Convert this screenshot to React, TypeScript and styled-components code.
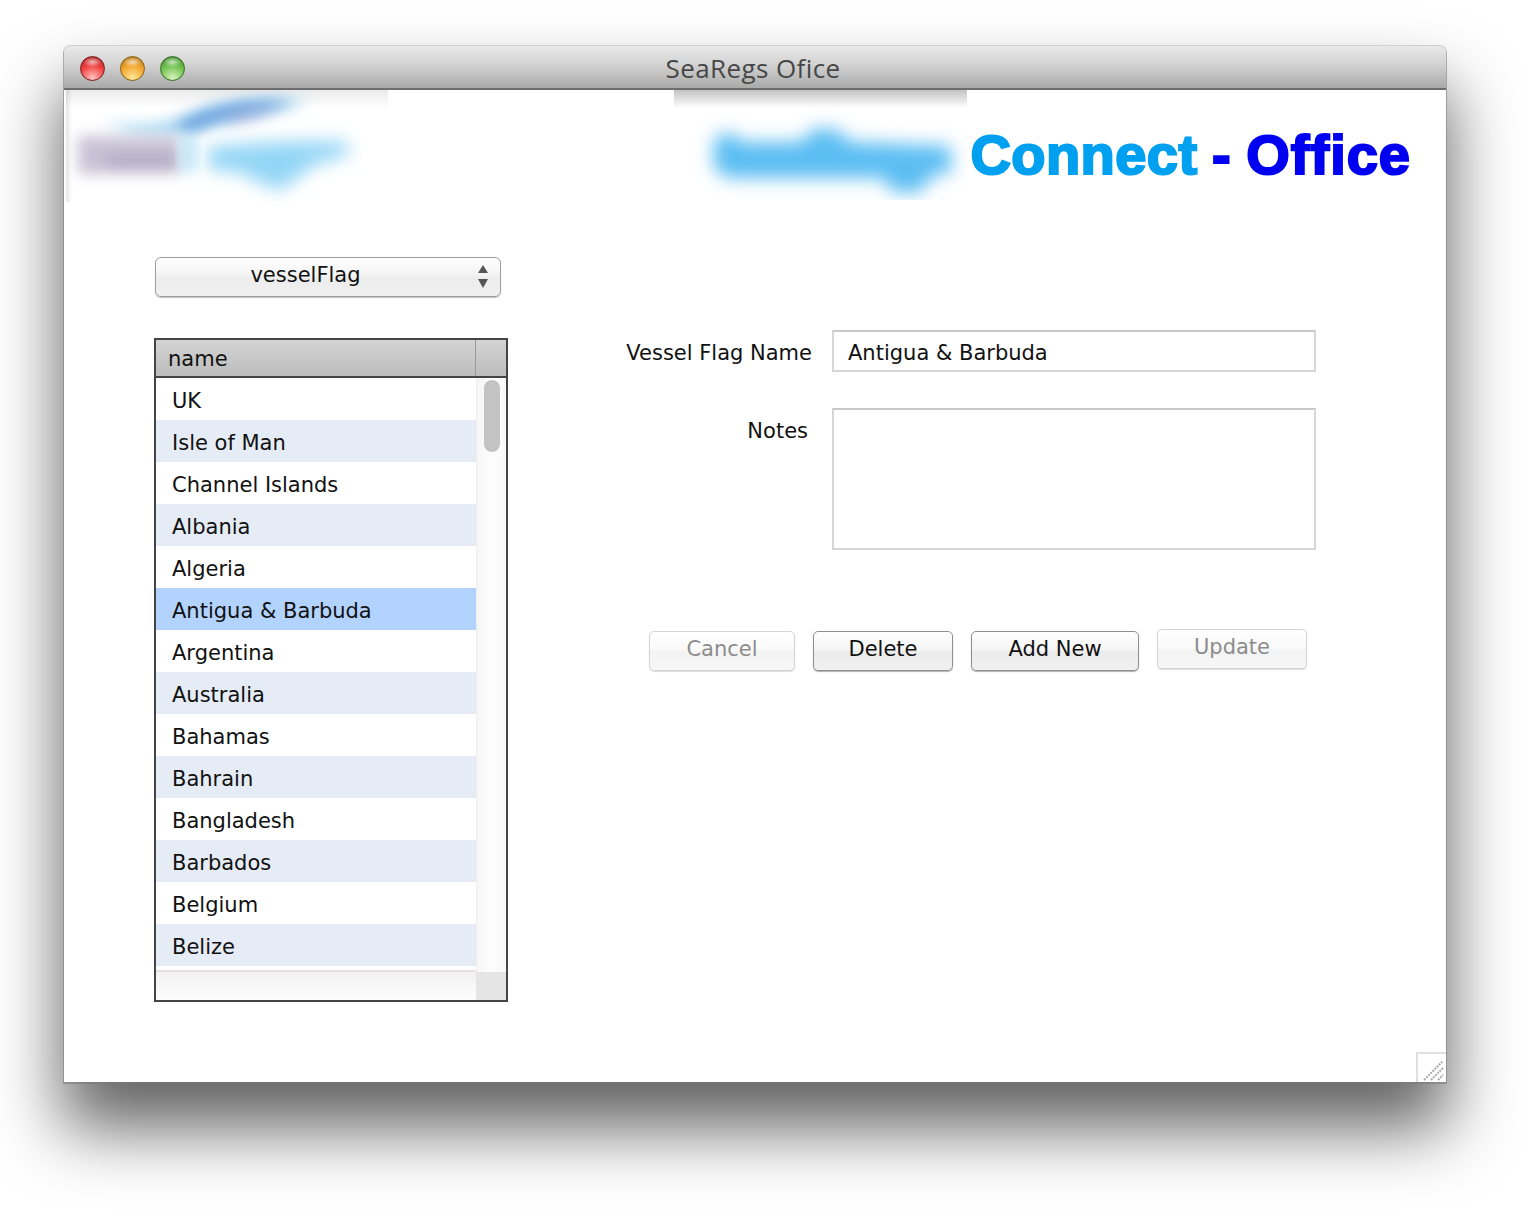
import React from 'react';
import styled, { createGlobalStyle } from 'styled-components';

const GlobalStyle = createGlobalStyle`
  html, body {
    margin: 0;
    padding: 0;
    background: #fff;
  }
  body {
    font-family: "DejaVu Sans", "Liberation Sans", sans-serif;
    color: #111;
  }
`;

const Page = styled.div`
  width: 1526px;
  height: 1218px;
  padding: 45px 80px 136px 64px;
  box-sizing: border-box;
  overflow: hidden;
`;

const Window = styled.div`
  position: relative;
  height: 100%;
  display: flex;
  flex-direction: column;
  background: #fff;
  border-radius: 7px 7px 0 0;
  box-shadow: 0 1px 0 1px rgba(120, 120, 120, 0.55), 0 44px 68px 2px rgba(0, 0, 0, 0.62);
`;

const TitleBar = styled.div`
  position: relative;
  height: 45px;
  flex: none;
  box-sizing: border-box;
  display: flex;
  align-items: center;
  gap: 15px;
  padding: 2px 0 0 16px;
  border-radius: 7px 7px 0 0;
  border-top: 1px solid #cfcfcf;
  border-bottom: 2px solid #6d6d6d;
  background: linear-gradient(#e9e9e9, #d2d2d2 45%, #a9a9a9);
`;

const Light = styled.span<{ $main: string; $dark: string; $glow: string }>`
  width: 25px;
  height: 25px;
  border-radius: 50%;
  box-sizing: border-box;
  border: 1px solid ${(p) => p.$dark};
  background:
    radial-gradient(ellipse 9px 5px at 50% 22%, rgba(255, 255, 255, 0.65), rgba(255, 255, 255, 0) 100%),
    radial-gradient(circle at 50% 92%, ${(p) => p.$glow}, ${(p) => p.$main} 55%, ${(p) => p.$dark} 115%);
`;

const WindowTitle = styled.div`
  position: absolute;
  left: 0;
  right: 4px;
  top: 5px;
  text-align: center;
  font-family: "Open Sans", sans-serif;
  font-size: 26px;
  line-height: 34px;
  letter-spacing: 0.4px;
  color: #474747;
`;

const Banner = styled.div`
  height: 112px;
  flex: none;
  display: flex;
  justify-content: space-between;
  padding: 0 35px 0 2px;
`;

const BannerRight = styled.div`
  display: flex;
  align-items: flex-start;
  gap: 3px;
  margin-top: -2px;
`;

const Art = styled.svg`
  display: block;
  flex: none;
`;

const Wordmark = styled.div`
  margin-top: 35px;
  font-family: "Liberation Sans", Arial, sans-serif;
  font-weight: 700;
  font-size: 56px;
  line-height: 64px;
  letter-spacing: 1px;
  word-spacing: -2px;
  white-space: nowrap;
  color: #0000f0;
  -webkit-text-stroke: 2.2px currentColor;
`;

const WordSky = styled.span`
  color: #00a0f0;
  letter-spacing: 0.45px;
`;

const Content = styled.div`
  flex: 1;
  display: flex;
  padding: 55px 0 0 90px;
`;

const LeftColumn = styled.div`
  width: 354px;
  flex: none;
  display: flex;
  flex-direction: column;
  gap: 41px;
`;

const Combo = styled.div`
  width: 346px;
  height: 40px;
  margin-left: 1px;
  box-sizing: border-box;
  display: flex;
  align-items: center;
  padding: 0 11px 4px 0;
  border: 1px solid #9d9d9d;
  border-radius: 6px;
  background: linear-gradient(#ffffff, #f3f3f3 45%, #ececec 55%, #f0f0f0);
  box-shadow: 0 1px 1px rgba(0, 0, 0, 0.25);
  font-size: 21px;
`;

const ComboLabel = styled.span`
  flex: 1;
  text-align: center;
  padding: 0 22px 0 0;
`;

const ComboArrows = styled.svg`
  display: block;
  margin-top: 4px;
`;

const TableBox = styled.div`
  height: 664px;
  box-sizing: border-box;
  border: 2px solid #444;
  display: flex;
  flex-direction: column;
`;

const TableHead = styled.div`
  height: 38px;
  flex: none;
  box-sizing: border-box;
  display: grid;
  grid-template-columns: 320px 1fr;
  border-bottom: 2px solid #444;
  background: linear-gradient(#d4d4d4, #bcbcbc);
`;

const HeadCell = styled.div`
  padding: 1px 0 0 12px;
  display: flex;
  align-items: center;
  border-right: 1px solid #9a9a9a;
  font-size: 21px;
`;

const TableBody = styled.div`
  flex: 1;
  min-height: 0;
  display: grid;
  grid-template-columns: 320px 1fr;
`;

const RowList = styled.div`
  border-bottom: 2px solid #e4e0e0;
  padding-bottom: 4px;
`;

const Row = styled.div<{ $tone: 'plain' | 'stripe' | 'selected' }>`
  height: 42px;
  box-sizing: border-box;
  display: flex;
  align-items: center;
  padding: 4px 0 0 16px;
  font-size: 21px;
  white-space: nowrap;
  background: ${(p) =>
    p.$tone === 'selected' ? '#b3d3ff' : p.$tone === 'stripe' ? '#e6ecf6' : '#fff'};
`;

const ScrollTrack = styled.div`
  padding: 2px 6px 0 7px;
  border-left: 1px solid #eee;
  background: linear-gradient(90deg, #f6f6f6, #fdfdfd 50%, #f8f8f8);
`;

const ScrollThumb = styled.div`
  height: 72px;
  border-radius: 8px;
  background: #c3c3c3;
`;

const TableFoot = styled.div`
  height: 28px;
  flex: none;
  display: grid;
  grid-template-columns: 320px 1fr;
  background: linear-gradient(#f2f2f2, #fcfcfc);
`;

const FootCorner = styled.div`
  grid-column: 2;
  background: #e5e5e5;
`;

const RightColumn = styled.div`
  display: flex;
  flex-direction: column;
  padding: 73px 0 0 82px;
`;

const FormGrid = styled.div`
  display: grid;
  grid-template-columns: 222px 484px;
  column-gap: 20px;
  row-gap: 36px;
`;

const FieldLabel = styled.label<{ $inset?: number }>`
  box-sizing: border-box;
  height: 42px;
  text-align: right;
  font-size: 21px;
  line-height: 38px;
  padding-top: 4px;
  padding-right: ${(p) => p.$inset ?? 0}px;
  white-space: nowrap;
`;

const TextInput = styled.input`
  width: 484px;
  height: 42px;
  box-sizing: border-box;
  padding: 4px 0 0 14px;
  border: 2px solid #d6d6d6;
  border-top-color: #c8c8c8;
  outline: none;
  background: #fff;
  font: inherit;
  font-size: 21px;
  color: #111;
`;

const TextArea = styled.textarea`
  display: block;
  width: 484px;
  height: 142px;
  box-sizing: border-box;
  padding: 4px 14px;
  border: 2px solid #d6d6d6;
  border-top-color: #c8c8c8;
  outline: none;
  resize: none;
  background: #fff;
`;

const ButtonRow = styled.div`
  display: flex;
  gap: 18px;
  align-items: flex-start;
  margin: 81px 0 0 59px;
`;

const Button = styled.button<{ $width: number; $raised?: boolean }>`
  width: ${(p) => p.$width}px;
  height: 40px;
  margin-top: ${(p) => (p.$raised ? -2 : 0)}px;
  padding: 0 0 5px;
  box-sizing: border-box;
  border: 1px solid #8f8f8f;
  border-radius: 5px;
  background: linear-gradient(#ffffff, #f4f4f4 48%, #ebebeb 52%, #f1f1f1);
  box-shadow: 0 1px 1px rgba(0, 0, 0, 0.3);
  font-family: inherit;
  font-size: 21px;
  color: #111;

  &:disabled {
    border-color: #d4d4d4;
    background: linear-gradient(#ffffff, #f9f9f9 48%, #f3f3f3 52%, #f7f7f7);
    box-shadow: 0 1px 1px rgba(0, 0, 0, 0.14);
    color: #8c8c8c;
  }
`;

const Grip = styled.svg`
  position: absolute;
  right: 0;
  bottom: 0;
  display: block;
`;

const countries = [
  'UK',
  'Isle of Man',
  'Channel Islands',
  'Albania',
  'Algeria',
  'Antigua & Barbuda',
  'Argentina',
  'Australia',
  'Bahamas',
  'Bahrain',
  'Bangladesh',
  'Barbados',
  'Belgium',
  'Belize',
];

const selected = 'Antigua & Barbuda';

const rowTone = (name: string, index: number) => {
  if (name === selected) return 'selected';
  return index % 2 === 1 ? 'stripe' : 'plain';
};

const LeftLogo = () => (
  <Art width="322" height="112" viewBox="66 90 322 112">
    <defs>
      <linearGradient id="leftShade" x1="0" y1="0" x2="0" y2="1">
        <stop offset="0" stopColor="#000" stopOpacity="0.08" />
        <stop offset="1" stopColor="#000" stopOpacity="0" />
      </linearGradient>
      <linearGradient id="leftEdge" x1="0" y1="0" x2="1" y2="0">
        <stop offset="0" stopColor="#000" stopOpacity="0.1" />
        <stop offset="1" stopColor="#000" stopOpacity="0" />
      </linearGradient>
      <filter id="softLarge" x="-30%" y="-100%" width="160%" height="300%">
        <feGaussianBlur stdDeviation="9" />
      </filter>
      <filter id="softSmall" x="-30%" y="-100%" width="160%" height="300%">
        <feGaussianBlur stdDeviation="7" />
      </filter>
    </defs>
    <rect x="66" y="90" width="322" height="18" fill="url(#leftShade)" />
    <rect x="66" y="90" width="6" height="112" fill="url(#leftEdge)" />
    <path d="M106 122 C135 128 165 124 190 114 C215 102 260 96 310 100 C275 114 235 120 205 128 C175 138 130 140 106 122 Z" fill="#a6d8f3" filter="url(#softSmall)" />
    <path d="M176 126 C205 106 250 98 294 102 C258 112 215 118 188 134 Z" fill="#6a9fdc" filter="url(#softSmall)" />
    <path d="M225 116 C245 110 265 108 285 106 C265 116 245 122 230 124 Z" fill="#a99fd0" opacity="0.5" filter="url(#softSmall)" />
    <rect x="78" y="136" width="102" height="38" fill="#c8c3d6" filter="url(#softSmall)" />
    <rect x="106" y="155" width="72" height="10" fill="#9c96b6" opacity="0.6" filter="url(#softSmall)" />
    <path d="M180 135 L196 135 L196 172 L180 172 Z" fill="#bfe5f8" filter="url(#softSmall)" />
    <path d="M206 148 C250 142 300 140 350 142 L346 156 L315 164 L300 176 L280 190 L262 184 L240 172 L210 170 Z" fill="#93d5f6" filter="url(#softLarge)" />
  </Art>
);

const RightLogo = () => (
  <Art width="293" height="112" viewBox="674 88 293 112">
    <defs>
      <linearGradient id="rightShade" x1="0" y1="0" x2="0" y2="1">
        <stop offset="0" stopColor="#000" stopOpacity="0.26" />
        <stop offset="1" stopColor="#000" stopOpacity="0" />
      </linearGradient>
      <filter id="softBlue" x="-20%" y="-60%" width="140%" height="220%">
        <feGaussianBlur stdDeviation="9" />
      </filter>
    </defs>
    <rect x="674" y="88" width="293" height="20" fill="url(#rightShade)" />
    <path d="M714 138 L730 132 L742 142 L800 142 L816 128 L838 130 L850 142 L950 146 L952 172 L930 176 L922 192 L892 192 L884 178 L730 178 L714 170 Z" fill="#5cbdf3" filter="url(#softBlue)" />
  </Art>
);

const App = () => {
  return (
    <Page>
      <GlobalStyle />
      <Window>
        <TitleBar>
          <Light $main="#f0403f" $dark="#7d1a1c" $glow="#ffc4c0" />
          <Light $main="#f2a52c" $dark="#8a5f10" $glow="#ffe79a" />
          <Light $main="#6fc24f" $dark="#2f6d1f" $glow="#d9f3bd" />
          <WindowTitle>SeaRegs Ofice</WindowTitle>
        </TitleBar>
        <Banner>
          <LeftLogo />
          <BannerRight>
            <RightLogo />
            <Wordmark>
              <WordSky>Connect</WordSky> - Office
            </Wordmark>
          </BannerRight>
        </Banner>
        <Content>
          <LeftColumn>
            <Combo>
              <ComboLabel>vesselFlag</ComboLabel>
              <ComboArrows width="12" height="24" viewBox="0 0 12 24">
                <path d="M6 0 L11 8 L1 8 Z" fill="#555" />
                <path d="M6 23 L11 14 L1 14 Z" fill="#555" />
              </ComboArrows>
            </Combo>
            <TableBox>
              <TableHead>
                <HeadCell>name</HeadCell>
              </TableHead>
              <TableBody>
                <RowList>
                  {countries.map((name, index) => (
                    <Row key={name} $tone={rowTone(name, index)}>
                      {name}
                    </Row>
                  ))}
                </RowList>
                <ScrollTrack>
                  <ScrollThumb />
                </ScrollTrack>
              </TableBody>
              <TableFoot>
                <FootCorner />
              </TableFoot>
            </TableBox>
          </LeftColumn>
          <RightColumn>
            <FormGrid>
              <FieldLabel>Vessel Flag Name</FieldLabel>
              <TextInput readOnly value={selected} />
              <FieldLabel $inset={4}>Notes</FieldLabel>
              <TextArea readOnly value="" />
            </FormGrid>
            <ButtonRow>
              <Button $width={146} disabled>Cancel</Button>
              <Button $width={140}>Delete</Button>
              <Button $width={168}>Add New</Button>
              <Button $width={150} $raised disabled>Update</Button>
            </ButtonRow>
          </RightColumn>
        </Content>
        <Grip width="30" height="30" viewBox="0 0 30 30">
          <path d="M1 30 L1 1 L30 1" fill="none" stroke="#e0e0e0" strokeWidth="2" />
          <path d="M8 28 L27 9 M15 28 L27 16 M22 28 L27 23" fill="none" stroke="#a8a8a8" strokeWidth="2" strokeDasharray="2 1" />
        </Grip>
      </Window>
    </Page>
  );
};

export default App;
